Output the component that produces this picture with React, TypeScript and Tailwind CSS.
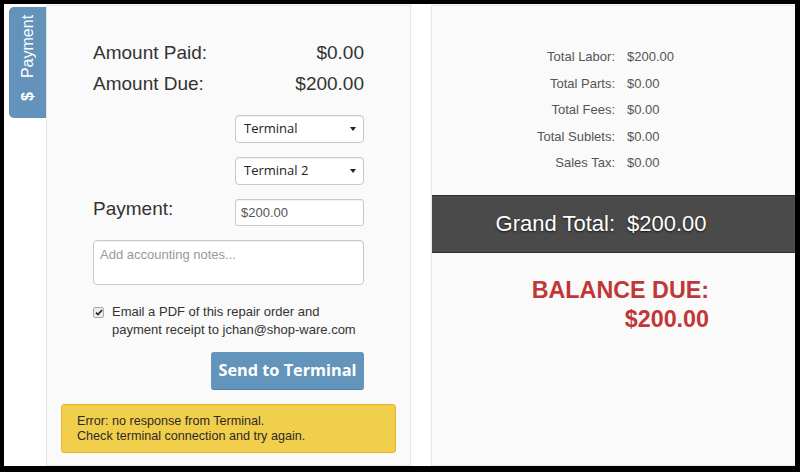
import React from "react";

const arial = "font-['Liberation_Sans',Arial,sans-serif]";

const totals = [
  { label: "Total Labor:", value: "$200.00" },
  { label: "Total Parts:", value: "$0.00" },
  { label: "Total Fees:", value: "$0.00" },
  { label: "Total Sublets:", value: "$0.00" },
  { label: "Sales Tax:", value: "$0.00" },
];

function Caret() {
  return (
    <svg width="6" height="4" viewBox="0 0 6 4" className="shrink-0">
      <polygon points="0,0 6,0 3,4" fill="#222" />
    </svg>
  );
}

function FakeSelect({ value }: { value: string }) {
  return (
    <div className="flex h-[28px] w-full items-center justify-between rounded-[4px] border border-[#c8c8c8] bg-white pl-[8px] pr-[7px] font-['Open_Sans',sans-serif] text-[13px] text-[#222] shadow-[inset_0_1px_1px_rgba(0,0,0,0.06)]">
      <span>{value}</span>
      <Caret />
    </div>
  );
}

export default function App() {
  return (
    <div className={`h-[472px] w-[800px] bg-black pb-[6px] pl-[4px] pr-[5px] pt-[4px] ${arial}`}>
      <div className="flex h-full overflow-hidden bg-white">
        {/* side tab */}
        <div className="w-[42px] shrink-0 pl-[5px] pt-[3px]">
          <div className="flex h-[111px] w-[37px] items-start justify-center rounded-l-[5px] bg-[#6393bb] pt-[8px] text-[16px] text-white">
            <span className="rotate-180 leading-none [writing-mode:vertical-rl]">
              <span className="font-bold">$</span>
              <span className="ms-[14px]">Payment</span>
            </span>
          </div>
        </div>

        {/* payment form */}
        <div className="mt-[1px] w-[365px] shrink-0 border border-[#e6e6e6] bg-[#fafafa] px-[46px] pt-[31px] text-[#333] shadow-[0_0_2px_rgba(0,0,0,0.05)]">
          <div className="text-[19px] leading-[31px]">
            <div className="flex justify-between">
              <span>Amount Paid:</span>
              <span>$0.00</span>
            </div>
            <div className="flex justify-between">
              <span>Amount Due:</span>
              <span>$200.00</span>
            </div>
          </div>

          <div className="ml-auto mt-[16px] flex w-[129px] flex-col gap-[14px]">
            <FakeSelect value="Terminal" />
            <FakeSelect value="Terminal 2" />
          </div>

          <div className="mt-[14px] flex items-start justify-between">
            <span className="text-[19px] leading-[20px]">Payment:</span>
            <div className="flex h-[27px] w-[129px] items-center rounded-[3px] border border-[#c8c8c8] bg-white pl-[5px] text-[13px] text-[#555] shadow-[inset_0_1px_1px_rgba(0,0,0,0.06)]">
              $200.00
            </div>
          </div>

          <textarea
            placeholder="Add accounting notes..."
            className="mt-[14px] block h-[45px] w-full resize-none rounded-[4px] border border-[#c8c8c8] bg-white px-[6px] pt-[6px] text-[13px] leading-[15px] text-[#555] shadow-[inset_0_1px_1px_rgba(0,0,0,0.06)] outline-none placeholder:text-[#999]"
          />

          <div className="mt-[18px] flex items-start gap-[8px] text-[13px] leading-[18px] text-[#333]">
            <span className="mt-[4px] flex h-[11px] w-[11px] shrink-0 items-center justify-center rounded-[2px] border border-[#a8a8a8] bg-[#ececec]">
              <svg width="8" height="7" viewBox="0 0 8 7">
                <path d="M1 3.6 L3 5.6 L7 1" stroke="#222" strokeWidth="1.6" fill="none" />
              </svg>
            </span>
            <span>
              Email a PDF of this repair order and
              <br />
              payment receipt to jchan@shop-ware.com
            </span>
          </div>

          <div className="mt-[13px] flex justify-end">
            <button className="h-[38px] w-[153px] rounded-[3px] border-b border-[#4f7ea6] bg-[#6394bc] font-['Open_Sans',sans-serif] text-[16.3px] font-bold text-white">
              Send to Terminal
            </button>
          </div>

          <div className="-mx-[32px] mt-[14px] rounded-[3px] border border-[#e3b52e] bg-[#f2cf4a] pb-[8px] pl-[15px] pt-[9px] text-[12.6px] leading-[15px] text-[#2a2a2a]">
            Error: no response from Terminal.
            <br />
            Check terminal connection and try again.
          </div>
        </div>

        <div className="w-[20px] shrink-0" />

        {/* totals */}
        <div className="mt-[1px] w-[364px] shrink-0 border border-r-0 border-[#e6e6e6] bg-[#fafafa] pt-[38px] shadow-[0_0_2px_rgba(0,0,0,0.05)]">
          <div className="text-[13px] leading-[26.5px] text-[#555]">
            {totals.map((t) => (
              <div key={t.label} className="flex gap-[12px]">
                <span className="w-[183px] text-right">{t.label}</span>
                <span>{t.value}</span>
              </div>
            ))}
          </div>

          <div className="mt-[18px] flex h-[58px] items-center gap-[12px] border-y border-[#2f2f2f] bg-[#4a4a4a] text-[22px] text-white [text-shadow:0_1px_2px_rgba(0,0,0,0.7)]">
            <span className="w-[183px] text-right">Grand Total:</span>
            <span>$200.00</span>
          </div>

          <div className="mt-[23px] w-[277px] text-right text-[23.3px] font-bold leading-[29px] text-[#c03737]">
            BALANCE DUE:
            <br />
            $200.00
          </div>
        </div>
      </div>
    </div>
  );
}
